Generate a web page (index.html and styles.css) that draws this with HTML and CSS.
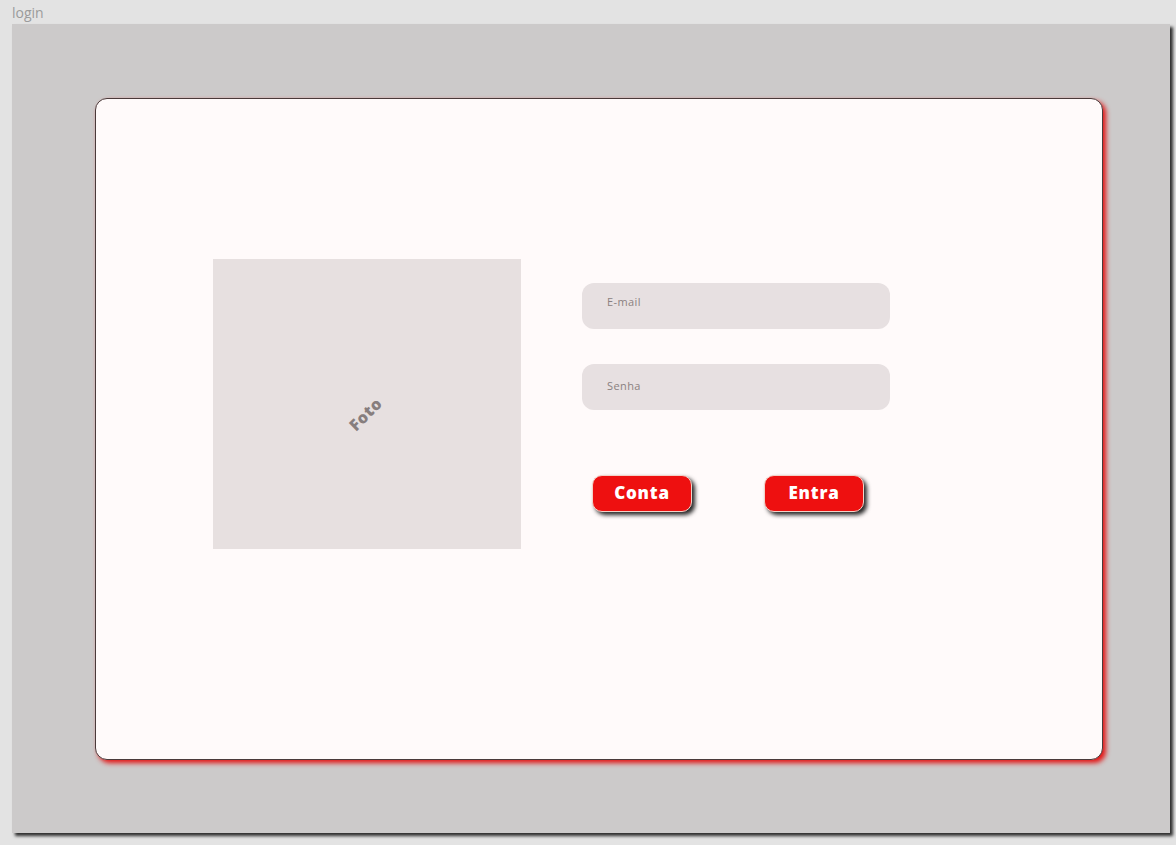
FILE: index.html
```html
<!DOCTYPE html>
<html lang="pt">
<head>
<meta charset="utf-8">
<title>login</title>
<link rel="stylesheet" href="styles.css">
</head>
<body>
<div class="label">login</div>
<div class="frame">
  <div class="card">
    <div class="photo"><span class="photo-text">Foto</span></div>
    <div class="form">
      <div class="field">E-mail</div>
      <div class="field field-second">Senha</div>
      <div class="buttons">
        <button class="btn">Conta</button>
        <button class="btn">Entra</button>
      </div>
    </div>
  </div>
</div>
</body>
</html>
```
FILE: styles.css
```css
html, body {
  margin: 0;
  padding: 0;
}
body {
  background: #e3e3e3;
  width: 1176px;
  height: 845px;
  overflow: hidden;
  font-family: "Open Sans", "Liberation Sans", sans-serif;
}
.label {
  height: 24px;
  padding-left: 12px;
  box-sizing: border-box;
  padding-top: 4px;
  font-size: 14px;
  line-height: 18px;
  color: #9b9b9b;
}
.frame {
  margin-left: 12px;
  width: 1158px;
  height: 809px;
  background: #cccaca;
  box-shadow: 3px 3px 3px rgba(0, 0, 0, 0.8);
  padding-top: 74px;
  padding-left: 83px;
  box-sizing: border-box;
}
.card {
  width: 1008px;
  height: 662px;
  box-sizing: border-box;
  background: #fffafa;
  border: 1px solid #4a3a3a;
  border-radius: 12px;
  box-shadow: 3px 3px 5px #e41414;
  display: flex;
  align-items: flex-start;
  gap: 61px;
  padding-top: 160px;
  padding-left: 117px;
}
.photo {
  width: 308px;
  height: 290px;
  background: #e7e0e0;
  display: flex;
  align-items: center;
  justify-content: center;
}
.photo-text {
  transform: translate(-2px, 10px) rotate(-45deg);
  font-weight: 800;
  font-size: 16px;
  color: #877e7e;
  letter-spacing: 0.6px;
}
.form {
  margin-top: 24px;
  display: flex;
  flex-direction: column;
}
.field {
  width: 308px;
  height: 46px;
  box-sizing: border-box;
  background: #e7e0e1;
  border-radius: 12px;
  padding-left: 25px;
  padding-top: 11px;
  font-size: 11px;
  line-height: 16px;
  color: #8a8080;
  letter-spacing: 0.4px;
}
.field-second {
  margin-top: 35px;
  padding-top: 14px;
}
.buttons {
  margin-top: 65px;
  padding-left: 10px;
  display: flex;
  gap: 72px;
}
.btn {
  width: 100px;
  height: 37px;
  box-sizing: border-box;
  background: #ee1010;
  border: 1px solid #f3d2c8;
  border-radius: 10px;
  box-shadow: 3px 3px 4px rgba(0, 0, 0, 0.85);
  color: #ffffff;
  font-family: "Open Sans", "Liberation Sans", sans-serif;
  font-weight: 800;
  font-size: 17px;
  line-height: 20px;
  padding: 0 0 2px 0;
  letter-spacing: 0.8px;
}
```
